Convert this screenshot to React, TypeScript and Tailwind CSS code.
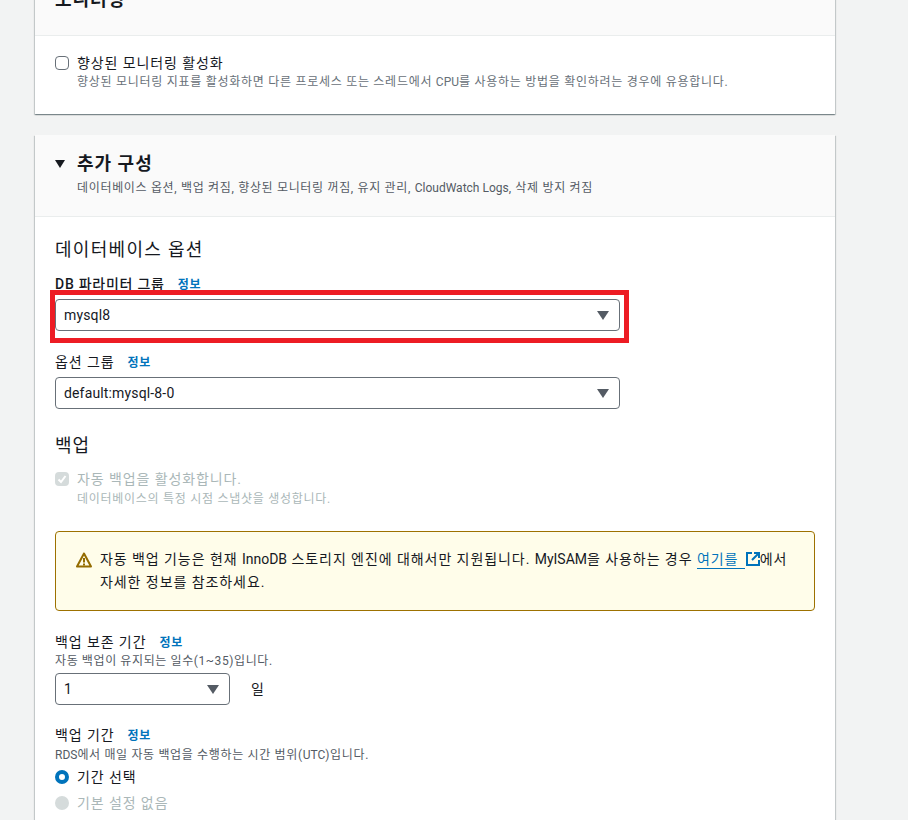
const font = "font-['Roboto','Noto_Sans_CJK_KR',sans-serif]";

function Info() {
  return <span className="ml-[13px] text-xs font-bold tracking-[0.7px] text-[#0073bb]">정보</span>;
}

function Latin({ children }: { children: string }) {
  return <span className="tracking-normal">{children}</span>;
}

function Select({ value, width }: { value: string; width: string }) {
  return (
    <div className={`flex h-8 items-center justify-between rounded-sm border border-[#687078] bg-white pl-2 pr-[10px] text-sm tracking-[0.15px] text-[#16191f] ${width}`}>
      <span>{value}</span>
      <svg width="12" height="9" viewBox="0 0 12 9">
        <path d="M0 0h12L6 9z" fill="#545b64" />
      </svg>
    </div>
  );
}

function Caret() {
  return (
    <svg width="10" height="8" viewBox="0 0 10 8" className="shrink-0">
      <path d="M0 0h10L5 8z" fill="#16191f" />
    </svg>
  );
}

export default function App() {
  return (
    <div className={`h-[820px] w-[908px] overflow-hidden bg-[#f2f3f3] pl-[35px] ${font}`}>
      <div className="w-[800px]">
        {/* Monitoring card, scrolled off the top */}
        <section className="-mt-[20px] bg-white shadow-[0_1px_1px_0_rgba(0,28,36,0.3),1px_1px_1px_0_rgba(0,28,36,0.15),-1px_1px_1px_0_rgba(0,28,36,0.15)]">
          <div className="flex h-[56px] items-start border-b border-[#eaeded] bg-[#fafafa] px-5 pt-[8px]">
            <h2 className="text-lg leading-6 font-bold tracking-[1px] text-[#16191f]">모니터링</h2>
          </div>
          <div className="h-[78px] px-5 pt-[18px]">
            <div className="flex gap-2">
              <span className="mt-[2px] h-[14px] w-[14px] shrink-0 rounded-sm border border-[#687078] bg-white" />
              <div>
                <div className="text-sm leading-[18px] tracking-[0.9px] text-[#16191f]">향상된 모니터링 활성화</div>
                <div className="mt-[2px] text-xs leading-4 tracking-[0.72px] text-[#687078]">
                  향상된 모니터링 지표를 활성화하면 다른 프로세스 또는 스레드에서 <Latin>CPU</Latin>를 사용하는 방법을 확인하려는 경우에 유용합니다.
                </div>
              </div>
            </div>
          </div>
        </section>

        {/* Additional configuration card */}
        <section className="mt-[21px] h-[800px] bg-white shadow-[0_1px_1px_0_rgba(0,28,36,0.3),1px_1px_1px_0_rgba(0,28,36,0.15),-1px_1px_1px_0_rgba(0,28,36,0.15)]">
          <div className="h-[82px] border-b border-[#eaeded] bg-[#fafafa] px-5 pt-[17px]">
            <div className="flex items-center gap-3">
              <Caret />
              <h2 className="text-lg leading-6 font-bold tracking-[1px] text-[#16191f]">추가 구성</h2>
            </div>
            <p className="mt-[4px] pl-[22px] text-xs leading-4 tracking-[0.67px] text-[#545b64]">
              데이터베이스 옵션, 백업 켜짐, 향상된 모니터링 꺼짐, 유지 관리, <Latin>CloudWatch Logs</Latin>, 삭제 방지 켜짐
            </p>
          </div>

          <div className="px-5 pt-[21px]">
            <h3 className="text-lg leading-6 tracking-[1.3px] text-[#16191f]">데이터베이스 옵션</h3>
            <div className="mt-[13px] text-sm leading-[18px] tracking-[0.75px] text-[#16191f]">
              <span className="font-medium">DB 파라미터 그룹</span>
              <Info />
            </div>
            <div className="relative mt-[6px] w-[565px]">
              <Select value="mysql8" width="w-[565px]" />
              <div className="absolute -top-[9px] -right-[9px] -bottom-[12px] -left-[5px] border-[5px] border-[#ed1c24]" />
            </div>

            <div className="mt-[22px] text-sm leading-[18px] tracking-[0.9px] text-[#16191f]">
              옵션 그룹
              <Info />
            </div>
            <div className="mt-[6px]">
              <Select value="default:mysql-8-0" width="w-[565px]" />
            </div>

            <h3 className="mt-[25px] text-lg leading-6 tracking-[1px] text-[#16191f]">백업</h3>
            <div className="mt-[12px] flex gap-2">
              <span className="mt-[2px] flex h-[14px] w-[14px] shrink-0 items-center justify-center rounded-sm bg-[#d5dbdb]">
                <svg width="10" height="10" viewBox="0 0 10 10" fill="none">
                  <path d="M1.5 5.5 4 8l4.5-6" stroke="#fff" strokeWidth="2" />
                </svg>
              </span>
              <div>
                <div className="text-sm leading-[18px] tracking-[0.9px] text-[#aab7b8]">자동 백업을 활성화합니다.</div>
                <div className="mt-[3px] text-xs leading-4 tracking-[0.72px] text-[#aab7b8]">데이터베이스의 특정 시점 스냅샷을 생성합니다.</div>
              </div>
            </div>

            <div className="mt-[24px] flex h-[80px] w-[760px] gap-2 rounded-sm border border-[#9d7100] bg-[#fffdea] pt-[16px] pl-5 pr-5 text-sm leading-[23px] tracking-[0.93px] text-[#16191f]">
              <svg width="16" height="16" viewBox="0 0 16 16" fill="none" className="mt-[4px] shrink-0">
                <path d="M8 1.5 1 14.5h14z" stroke="#946c00" strokeWidth="2" strokeLinejoin="round" />
                <path d="M8 6v4.5M8 11.5v2" stroke="#946c00" strokeWidth="2" />
              </svg>
              <div>
                자동 백업 기능은 현재 <Latin>InnoDB</Latin> 스토리지 엔진에 대해서만 지원됩니다. <Latin>MyISAM</Latin>을 사용하는 경우{" "}
                <span className="border-b border-[#0073bb] pb-[1px] pr-[2px] text-[#0073bb]">여기를&nbsp;</span>
                <svg width="14" height="14" viewBox="0 0 14 14" fill="none" className="ml-[1px] inline align-[-2px]">
                  <path d="M6 1H1v12h12V8" stroke="#0073bb" strokeWidth="2" />
                  <path d="M8 1h5v5M13 1 6 8" stroke="#0073bb" strokeWidth="2" />
                </svg>
                에서
                <br />
                자세한 정보를 참조하세요.
              </div>
            </div>

            <div className="mt-[22px] text-sm leading-[18px] tracking-[0.9px] text-[#16191f]">
              백업 보존 기간
              <Info />
            </div>
            <div className="mt-[2px] text-xs leading-4 tracking-[0.6px] text-[#545b64]">자동 백업이 유지되는 일수(1~35)입니다.</div>
            <div className="mt-[4px] flex items-center gap-[21px]">
              <Select value="1" width="w-[175px]" />
              <span className="text-sm text-[#16191f]">일</span>
            </div>

            <div className="mt-[21px] text-sm leading-[18px] tracking-[0.9px] text-[#16191f]">
              백업 기간
              <Info />
            </div>
            <div className="mt-[3px] text-xs leading-4 tracking-[0.65px] text-[#545b64]"><Latin>RDS</Latin>에서 매일 자동 백업을 수행하는 시간 범위(<Latin>UTC</Latin>)입니다.</div>
            <div className="mt-[5px] flex items-center gap-2 text-sm leading-[18px] tracking-[0.9px] text-[#16191f]">
              <span className="h-[14px] w-[14px] rounded-full border-[4px] border-[#0073bb] bg-white" />
              기간 선택
            </div>
            <div className="mt-[8px] flex items-center gap-2 text-sm leading-[18px] tracking-[0.9px] text-[#aab7b8]">
              <span className="h-[14px] w-[14px] rounded-full bg-[#d5dbdb]" />
              기본 설정 없음
            </div>
          </div>
        </section>
      </div>
    </div>
  );
}
